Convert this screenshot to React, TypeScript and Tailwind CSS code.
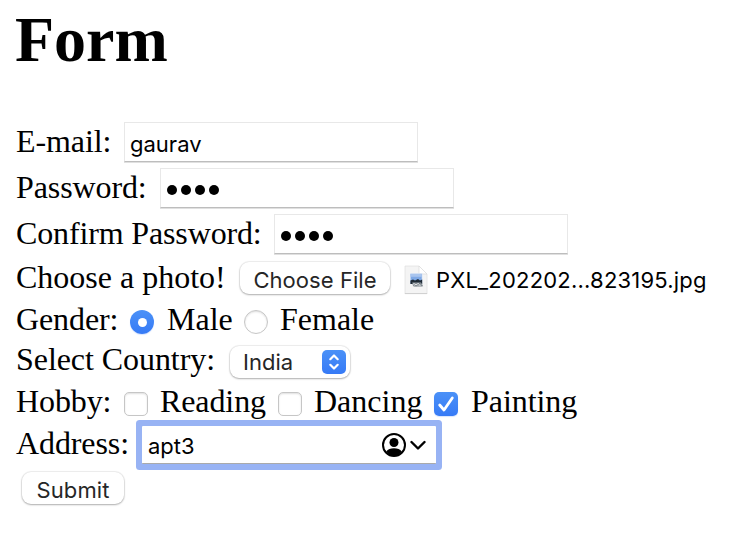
import type { ReactNode } from "react";

function Row({ height, children }: { height: string; children: ReactNode }) {
  return <div className={`flex items-start whitespace-nowrap ${height}`}>{children}</div>;
}

function Label({ width, children }: { width: string; children: ReactNode }) {
  return <span className={`shrink-0 ${width}`}>{children}</span>;
}

const sans = "font-['Inter','Liberation_Sans',sans-serif]";

function Field({ children }: { children: ReactNode }) {
  return (
    <div
      className={`-mt-px flex h-10 w-[294px] shrink-0 items-center border border-[#e8e8e8] border-b-[#bdbdbd] bg-white pt-[3px] pl-[5px] text-[22px] leading-none shadow-[0_1px_0_#e0e0e0] ${sans}`}
    >
      {children}
    </div>
  );
}

function Dots() {
  return (
    <span className="flex gap-1 pl-px">
      {[0, 1, 2, 3].map((n) => (
        <span key={n} className="size-2.5 rounded-full bg-black" />
      ))}
    </span>
  );
}

const button =
  "flex shrink-0 items-center rounded-[9px] bg-white text-[#262626] leading-none shadow-[0_0_1px_1px_rgba(0,0,0,0.07),0_1px_2px_rgba(0,0,0,0.27)]";

function Radio({ checked = false }: { checked?: boolean }) {
  return checked ? (
    <span className="mt-[9px] flex size-6 shrink-0 items-center justify-center rounded-full bg-linear-to-b from-[#4b91f7] to-[#367af6] shadow-[0_1px_1px_rgba(54,122,246,0.2)]">
      <span className="size-[9px] rounded-full bg-white" />
    </span>
  ) : (
    <span className="mt-[9px] size-6 shrink-0 rounded-full border border-[#c6c6c6] bg-white shadow-[inset_0_1px_2px_rgba(0,0,0,0.13)]" />
  );
}

function Checkbox({ checked = false }: { checked?: boolean }) {
  return checked ? (
    <span className="mt-[9px] size-6 shrink-0 rounded-[5px] bg-linear-to-b from-[#4b91f7] to-[#367af6] shadow-[0_1px_1px_rgba(54,122,246,0.2)]">
      <svg viewBox="0 0 24 24" className="size-6" fill="none" stroke="white" strokeWidth="2.8" strokeLinecap="round" strokeLinejoin="round">
        <path d="M5.7 13 10 18 18.3 6" />
      </svg>
    </span>
  ) : (
    <span className="mt-[9px] size-6 shrink-0 rounded-[5px] border border-[#c6c6c6] bg-white shadow-[inset_0_1px_2px_rgba(0,0,0,0.13)]" />
  );
}

function FileIcon() {
  return (
    <svg viewBox="0 0 24 30" className="mt-1.5 h-[30px] w-6 shrink-0">
      <path d="M1 1h14l8 8v19.5H1z" fill="#f4f4f4" stroke="#e2e2e2" strokeWidth=".8" />
      <path d="M.8 28.6h22.4" stroke="#c8c8c8" strokeWidth=".8" />
      <path d="M15 1v8h8z" fill="#fff" stroke="#dadada" strokeWidth=".7" />
      <path d="M6.2 8.5h12V19h-12z" fill="#7fa9e6" stroke="#f9f9f9" strokeWidth=".6" />
      <path d="M6.5 8.8h11.4v3H6.5z" fill="#a9c5ee" />
      <path d="M6.4 15.5 9 14.5l2 1 3-1.5 2 1.5 2.2-1V19H6.4z" fill="#1e2a35" />
      <path d="M8.5 17.7h8.5l1.5 3.4H9.6z" fill="#d9dddf" stroke="#65707a" strokeWidth=".7" />
      <circle cx="12" cy="19.5" r="1.3" fill="#f5f5f5" stroke="#59636b" strokeWidth=".7" />
      <path d="m14 20.5 2-2.5 1.5 2.8" fill="none" stroke="#59636b" strokeWidth=".8" />
    </svg>
  );
}

export default function App() {
  return (
    <main className="h-[558px] w-[754px] overflow-hidden bg-white pt-1 pl-4 font-['Liberation_Serif',serif] text-[32px] leading-9 text-black">
      <h1 className="-ml-px h-[119px] text-[64px] leading-[72px] font-bold">Form</h1>
      <Row height="h-[46px]">
        <Label width="w-[108px] tracking-[-0.1px]">E-mail:</Label>
        <Field>gaurav</Field>
      </Row>
      <Row height="h-[46px]">
        <Label width="w-36 tracking-[-0.1px]">Password:</Label>
        <Field><Dots /></Field>
      </Row>
      <Row height="h-11">
        <Label width="w-[258px] tracking-[-0.14px]">Confirm Password:</Label>
        <Field><Dots /></Field>
      </Row>
      <Row height="h-[42px]">
        <Label width="w-56">Choose a photo!</Label>
        <span className={`mt-[3px] mr-3.5 h-8 w-[150px] justify-center pt-1 text-[22px] tracking-[0.05px] ${button} ${sans}`}>Choose File</span>
        <FileIcon />
        <span className={`mt-px pt-1 pl-2 text-[22px] leading-8 tracking-[0.2px] ${sans}`}>PXL_202202...823195.jpg</span>
      </Row>
      <Row height="h-10">
        <Label width="w-[114px] tracking-[-0.1px]">Gender:</Label>
        <Radio checked />
        <Label width="w-[90px] pl-[13px]">Male</Label>
        <Radio />
        <span className="pl-3">Female</span>
      </Row>
      <Row height="h-[42px]">
        <Label width="w-[214px] tracking-[-0.06px]">Select Country:</Label>
        <span className={`mt-[5px] h-8 w-[120px] justify-between pr-1 pl-[13px] text-[22px] ${button} ${sans}`}>
          <span>India</span>
          <span className="size-6 rounded-[5px] bg-linear-to-b from-[#4b91f7] to-[#367af6]">
            <svg viewBox="0 0 24 24" className="size-6" fill="none" stroke="white" strokeWidth="2.2" strokeLinecap="round" strokeLinejoin="round">
              <path d="m8.3 9.2 3.7-3.7 3.7 3.7M8.3 14.8l3.7 3.7 3.7-3.7" />
            </svg>
          </span>
        </span>
      </Row>
      <Row height="h-[42px]">
        <Label width="w-[108px] tracking-[-0.1px]">Hobby:</Label>
        <Checkbox />
        <Label width="w-[130px] pl-3 tracking-[-0.1px]">Reading</Label>
        <Checkbox />
        <Label width="w-[132px] pl-3">Dancing</Label>
        <Checkbox checked />
        <span className="pl-[13px] tracking-[-0.06px]">Painting</span>
      </Row>
      <Row height="h-[47px]">
        <Label width="w-[126px] tracking-[-0.1px]">Address:</Label>
        <div className={`mt-px flex h-[38px] w-[294px] items-center rounded-[1px] border-b border-[#aaa] bg-white pt-0.5 pl-1.5 text-[22px] leading-none ring-[6px] ring-[#98b3f4] ${sans}`}>
          <span className="flex-1">apt3</span>
          <svg viewBox="0 0 24 24" className="mb-0.5 size-6">
            <circle cx="12" cy="12" r="11" fill="white" stroke="black" strokeWidth="2" />
            <circle cx="12" cy="9.5" r="4.5" />
            <path d="M4.2 18.6C6 16.4 8.5 15.3 12 15.3s6 1.1 7.8 3.3C18 21.2 15.2 23 12 23s-6-1.8-7.8-4.4" />
          </svg>
          <svg viewBox="0 0 16 10" className="mr-2.5 mb-px ml-1 h-2.5 w-4" fill="none" stroke="black" strokeWidth="2.4" strokeLinecap="round" strokeLinejoin="round">
            <path d="m1.5 2 6.5 6.5L14.5 2" />
          </svg>
        </div>
      </Row>
      <span className={`ml-1.5 h-8 w-[102px] justify-center pt-1 text-[22px] tracking-[0.1px] ${button} ${sans}`}>Submit</span>
    </main>
  );
}
